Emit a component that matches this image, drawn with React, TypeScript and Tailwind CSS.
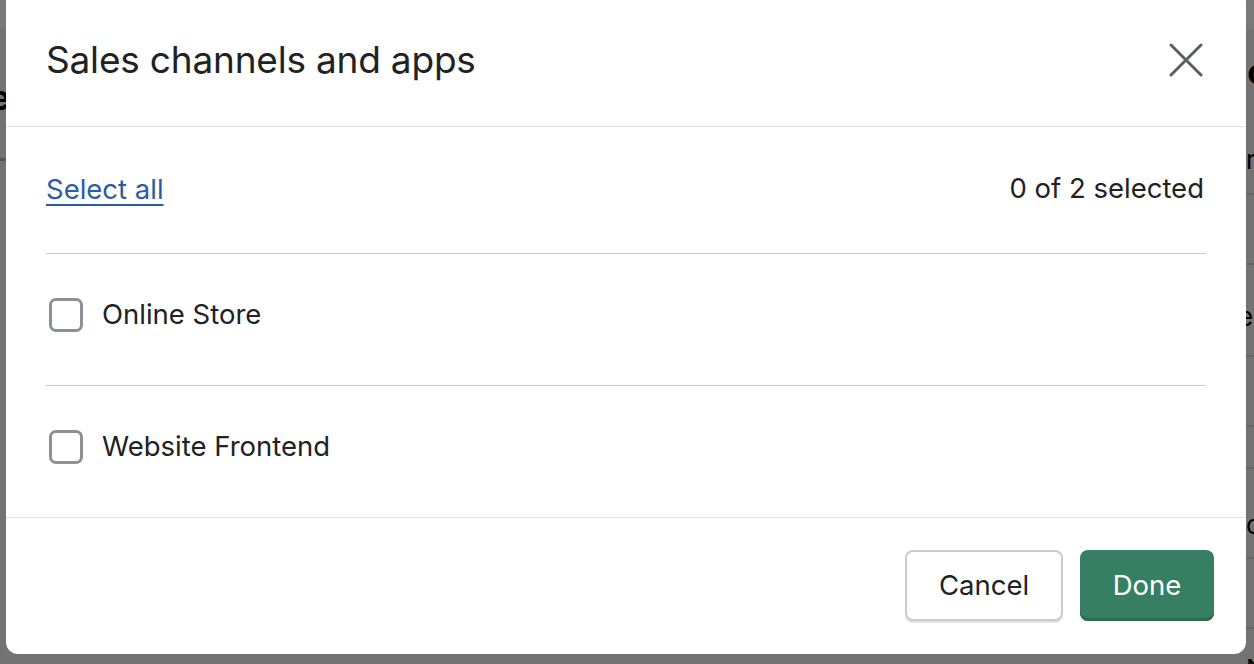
import { useState } from 'react';

const font = { fontFamily: 'Inter, "Noto Sans", sans-serif' };

function CloseIcon() {
  return (
    <svg width="34" height="34" viewBox="0 0 34 34" fill="none">
      <path d="M2 2 L32 32 M32 2 L2 32" stroke="#5c5f62" strokeWidth="3" strokeLinecap="round" />
    </svg>
  );
}

function Row({ label, checked, onToggle }: { label: string; checked: boolean; onToggle: () => void }) {
  return (
    <label className="flex items-center h-[132px] pb-[10px] border-t border-[#c9cccf] cursor-pointer">
      <span
        onClick={onToggle}
        className={`ml-[3px] w-[34px] h-[34px] rounded-[7px] border-[3px] ${checked ? 'border-[#377f62] bg-[#377f62]' : 'border-[#8c9196] bg-white'}`}
      />
      <span className="ml-[19px] text-[27.5px] text-[#202223]">{label}</span>
    </label>
  );
}

export default function App() {
  const channels = ['Online Store', 'Website Frontend'];
  const [selected, setSelected] = useState<string[]>([]);

  const toggle = (c: string) =>
    setSelected(s => (s.includes(c) ? s.filter(x => x !== c) : [...s, c]));

  return (
    <div className="relative h-[664px] w-full overflow-hidden bg-[#737373]" style={font}>
      {/* page behind the backdrop */}
      <div className="h-[29px] bg-[#7a7a7a]" />
      <div className="flex h-[129px] justify-between">
        <span className="ml-[-10px] mt-[52px] text-[34px] font-bold text-black leading-none">e</span>
        <span className="mr-[-14px] mt-[26px] text-[34px] font-bold text-black leading-none">o</span>
      </div>
      <div className="h-[3px] w-[8px] bg-[#555]" />
      <div className="absolute right-0 top-[140px] w-[8px] flex flex-col">
        <div className="h-[53px] overflow-hidden"><span className="text-[26px] text-black">r</span></div>
        <div className="h-[2px] bg-[#666]" />
        <div className="h-[68px]" />
        <div className="h-[2px] bg-[#666]" />
        <div className="h-[90px] overflow-hidden"><span className="block mt-[32px] ml-[-8px] text-[26px] text-black">e</span></div>
        <div className="h-[2px] bg-[#666]" />
        <div className="h-[68px]" />
        <div className="h-[2px] bg-[#666]" />
        <div className="h-[40px]" />
        <div className="h-[2px] bg-[#666]" />
        <div className="h-[88px] overflow-hidden"><span className="block mt-[36px] text-[26px] text-black">c</span></div>
        <div className="h-[2px] bg-[#666]" />
        <div className="h-[68px]" />
        <div className="h-[2px] bg-[#666]" />
        <div className="h-[40px] overflow-hidden"><span className="block mt-[20px] text-[26px] text-black">N</span></div>
      </div>

      {/* modal */}
      <div className="absolute left-[6px] top-[-10px] w-[1240px] h-[664px] bg-white rounded-[12px] flex flex-col overflow-hidden">
        <div className="h-[137px] shrink-0 flex items-center justify-between pl-[40px] pr-[43px] pt-[3px] border-b border-[#e1e3e5]">
          <h2 className="text-[37px] text-[#202223] tracking-[-0.2px]">Sales channels and apps</h2>
          <button className="p-0"><CloseIcon /></button>
        </div>

        <div className="flex-1 px-[40px]">
          <div className="h-[126px] flex items-center justify-between">
            <button
              onClick={() => setSelected(selected.length === channels.length ? [] : channels)}
              className="text-[27.5px] text-[#2c5da3] underline underline-offset-[5px] decoration-[2px]"
            >
              Select all
            </button>
            <span className="text-[27.5px] text-[#202223] mr-[2px] mb-[2px]">
              {selected.length} of {channels.length} selected
            </span>
          </div>
          {channels.map(c => (
            <Row key={c} label={c} checked={selected.includes(c)} onToggle={() => toggle(c)} />
          ))}
        </div>

        <div className="h-[147px] shrink-0 border-t border-[#e1e3e5] flex justify-end gap-[17px] pr-[32px] pt-[32px]">
          <button className="h-[71px] w-[158px] rounded-[8px] border-2 border-[#c9cccf] shadow-[0_2px_0_#e1e3e5] bg-white text-[27.5px] text-[#202223]">
            Cancel
          </button>
          <button className="h-[71px] w-[134px] rounded-[8px] bg-[#377f62] shadow-[inset_0_-3px_0_#2c6a51] text-[27.5px] text-white">
            Done
          </button>
        </div>
      </div>
    </div>
  );
}
